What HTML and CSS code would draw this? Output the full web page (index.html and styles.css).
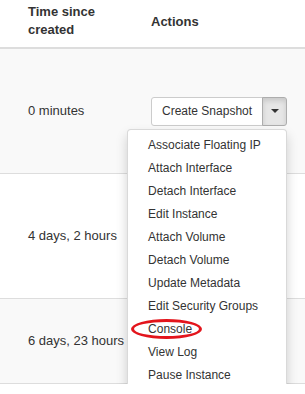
FILE: index.html
```html
<!DOCTYPE html>
<html>
<head>
<meta charset="utf-8">
<link rel="stylesheet" href="styles.css">
</head>
<body>
<div class="table">
  <div class="thead">
    <div class="th th-time">Time since<br>created</div>
    <div class="th th-actions">Actions</div>
  </div>
  <div class="tr striped">
    <div class="td td-time">0 minutes</div>
    <div class="td td-actions">
      <div class="btn-group">
        <button class="btn btn-main">Create Snapshot</button>
        <button class="btn btn-toggle active"><span class="caret"></span></button>
        <ul class="menu">
          <li class="item">Associate Floating IP</li>
          <li class="item">Attach Interface</li>
          <li class="item">Detach Interface</li>
          <li class="item">Edit Instance</li>
          <li class="item">Attach Volume</li>
          <li class="item">Detach Volume</li>
          <li class="item">Update Metadata</li>
          <li class="item">Edit Security Groups</li>
          <li class="item item-marked">Console<span class="mark"></span></li>
          <li class="item">View Log</li>
          <li class="item">Pause Instance</li>
          <li class="item">Suspend Instance</li>
          <li class="item">Shelve Instance</li>
          <li class="item">Resize Instance</li>
        </ul>
      </div>
    </div>
  </div>
  <div class="tr">
    <div class="td td-time">4 days, 2 hours</div>
    <div class="td td-actions">
      <div class="btn-group">
        <button class="btn btn-main">Create Snapshot</button>
        <button class="btn btn-toggle"><span class="caret"></span></button>
      </div>
    </div>
  </div>
  <div class="tr striped short">
    <div class="td td-time">6 days, 23 hours</div>
    <div class="td td-actions">
      <div class="btn-group">
        <button class="btn btn-main">Create Snapshot</button>
        <button class="btn btn-toggle"><span class="caret"></span></button>
      </div>
    </div>
  </div>
</div>
</body>
</html>
```
FILE: styles.css
```css
html, body {
  margin: 0;
  padding: 0;
  overflow: hidden;
  background: #fff;
}
body {
  font-family: "Liberation Sans", Arial, Helvetica, sans-serif;
  font-size: 13px;
  color: #333;
}
.table {
  width: 305px;
}
.thead {
  display: grid;
  grid-template-columns: 143px 1fr;
  align-items: center;
  border-bottom: 2px solid #ddd;
  box-sizing: border-box;
  height: 49px;
}
.th {
  font-weight: bold;
  line-height: 18px;
}
.th-time {
  padding: 3px 8px 8px 28px;
}
.th-actions {
  padding: 0 8px 4px 8px;
}
.tr {
  display: grid;
  grid-template-columns: 143px 1fr;
  align-items: center;
  border-bottom: 1px solid #ddd;
  box-sizing: border-box;
  height: 125px;
  background: #fff;
}
.tr.striped {
  background: #f9f9f9;
}
.tr.short {
  height: 85px;
}
.td {
  line-height: 18px;
}
.td-time {
  padding-left: 28px;
}
.td-actions {
  padding-left: 8px;
}
.btn-group {
  position: relative;
  display: inline-flex;
  vertical-align: middle;
}
.btn {
  font-family: inherit;
  font-size: 12px;
  line-height: 17px;
  color: #333;
  background: #fff;
  border: 1px solid #ccc;
  padding: 5px 10px;
  margin: 0;
  box-sizing: border-box;
  height: 29px;
  cursor: pointer;
}
.btn-main {
  border-radius: 3px 0 0 3px;
}
.btn-toggle {
  margin-left: -1px;
  width: 25px;
  padding: 0;
  border-radius: 0 3px 3px 0;
  display: flex;
  align-items: center;
  justify-content: center;
}
.btn-toggle.active {
  background: #e6e6e6;
  border-color: #adadad;
  box-shadow: inset 0 3px 5px rgba(0, 0, 0, 0.125);
}
.caret {
  display: block;
  width: 0;
  height: 0;
  border-top: 4px solid #333;
  border-left: 4px solid transparent;
  border-right: 4px solid transparent;
  margin-left: 1px;
}
.menu {
  position: absolute;
  top: 100%;
  right: 0;
  z-index: 10;
  margin: 3px 0 0;
  padding: 4px 0;
  list-style: none;
  width: 160px;
  box-sizing: border-box;
  background: #fff;
  border: 1px solid rgba(0, 0, 0, 0.15);
  border-radius: 4px;
  box-shadow: 0 6px 12px rgba(0, 0, 0, 0.175);
  font-size: 12px;
}
.item {
  padding: 3px 20px;
  line-height: 17px;
  color: #333;
  white-space: nowrap;
}
.item-marked {
  position: relative;
}
.mark {
  position: absolute;
  left: 3px;
  top: 1px;
  width: 71px;
  height: 20px;
  box-sizing: border-box;
  border: 3px solid #e3151c;
  border-radius: 50%;
}
```
